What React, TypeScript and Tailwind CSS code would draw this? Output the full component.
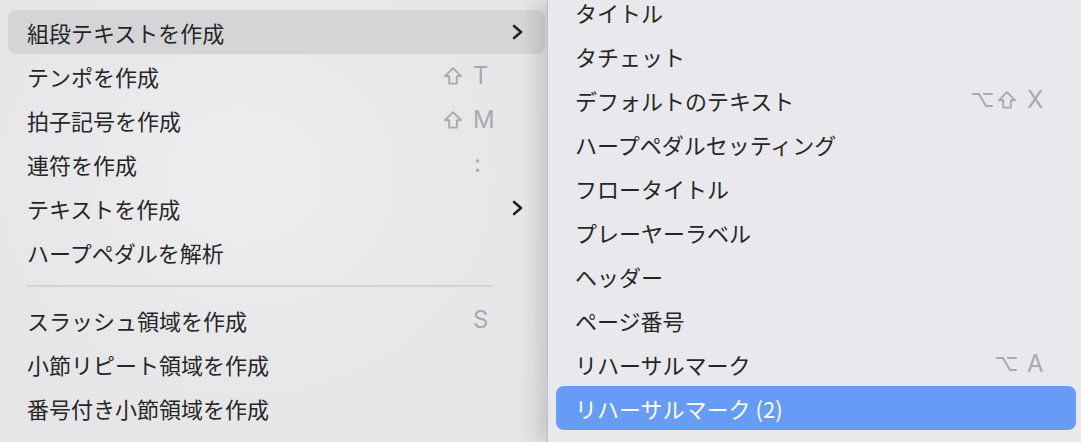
import { ReactNode } from "react";

type Mod = "shift" | "option";

interface MenuItem {
  label: string;
  mods?: Mod[];
  keyLabel?: string;
  submenu?: boolean;
  separator?: boolean;
  active?: boolean;
}

const mainItems: MenuItem[] = [
  { label: "組段テキストを作成", submenu: true, active: true },
  { label: "テンポを作成", mods: ["shift"], keyLabel: "T" },
  { label: "拍子記号を作成", mods: ["shift"], keyLabel: "M" },
  { label: "連符を作成", keyLabel: ":" },
  { label: "テキストを作成", submenu: true },
  { label: "ハープペダルを解析" },
  { label: "", separator: true },
  { label: "スラッシュ領域を作成", keyLabel: "S" },
  { label: "小節リピート領域を作成" },
  { label: "番号付き小節領域を作成" },
  { label: "コード記号領域を作成" },
];

const subItems: MenuItem[] = [
  { label: "タイトル" },
  { label: "タチェット" },
  { label: "デフォルトのテキスト", mods: ["option", "shift"], keyLabel: "X" },
  { label: "ハープペダルセッティング" },
  { label: "フロータイトル" },
  { label: "プレーヤーラベル" },
  { label: "ヘッダー" },
  { label: "ページ番号" },
  { label: "リハーサルマーク", mods: ["option"], keyLabel: "A" },
  { label: "リハーサルマーク (2)", active: true },
  { label: "サブタイトル" },
];

function ShiftIcon() {
  return (
    <svg width="20" height="20" viewBox="0 0 20 20" fill="none">
      <path
        d="M10 2.2 L18 10.2 H13.8 V17.6 H6.2 V10.2 H2 Z"
        stroke="#a9a9ab"
        strokeWidth="1.9"
        strokeLinejoin="round"
      />
    </svg>
  );
}

function OptionIcon() {
  return (
    <svg width="21" height="20" viewBox="0 0 21 20" fill="none">
      <path
        d="M1 4 H7 L14 16 H20 M12 4 H20"
        stroke="#a9a9ab"
        strokeWidth="1.9"
        strokeLinecap="round"
        strokeLinejoin="round"
      />
    </svg>
  );
}

function Chevron() {
  return (
    <svg width="14" height="16" viewBox="0 0 14 16" fill="none">
      <path
        d="M3 2 L10 8 L3 14"
        stroke="#222"
        strokeWidth="2.6"
        strokeLinecap="round"
        strokeLinejoin="round"
      />
    </svg>
  );
}

function Shortcut({ mods, keyLabel }: { mods?: Mod[]; keyLabel?: string }) {
  return (
    <div className="flex items-center">
      <div className="flex items-center gap-[4px] mr-[10px]">
        {mods?.map((m, i) => (
          <span key={i}>{m === "shift" ? <ShiftIcon /> : <OptionIcon />}</span>
        ))}
      </div>
    </div>
  );
}

function Row({
  item,
  rightWidth,
  highlight,
  children,
}: {
  item: MenuItem;
  rightWidth: string;
  highlight: string;
  children?: ReactNode;
}) {
  return (
    <div
      className={`h-[44px] flex items-center pl-[19px] rounded-[8px] ${
        item.active ? highlight : ""
      }`}
    >
      <span className="flex-1 text-[22px] leading-none tracking-[0px]">
        {item.label}
      </span>
      {item.mods && <Shortcut mods={item.mods} />}
      <div className={`${rightWidth} flex items-center shrink-0`}>
        {item.keyLabel && (
          <span
            className={`text-[24px] leading-none text-[#a9a9ab] ${
              item.keyLabel === ":" ? "pl-[1px] text-[18px]" : ""
            }`}
            style={{ fontFamily: "Inter, 'Liberation Sans', sans-serif" }}
          >
            {item.keyLabel}
          </span>
        )}
        {item.submenu && (
          <span className="pl-[38px] flex items-center">
            <Chevron />
          </span>
        )}
        {children}
      </div>
    </div>
  );
}

export default function App() {
  return (
    <div
      className="w-[1081px] h-[442px] overflow-hidden flex text-[#262626]"
      style={{ fontFamily: "'Noto Sans CJK JP', 'Noto Sans', sans-serif" }}
    >
      {/* main menu */}
      <div className="w-[547px] shrink-0 bg-[#e6e6e8] bg-[radial-gradient(ellipse_at_45%_40%,#eeeef0_0%,#e8e8ea_45%,#e4e4e6_100%)] pl-[8px] pr-[2px] pt-[10px]">
        {mainItems.map((item, i) =>
          item.separator ? (
            <div key={i} className="h-[24px] flex items-center pl-[19px] pr-[52px]">
              <div className="h-[2px] w-full bg-[#d4d4d6]" />
            </div>
          ) : (
            <Row
              key={i}
              item={item}
              rightWidth="w-[72px]"
              highlight="bg-[#d5d5d8]"
            />
          )
        )}
      </div>

      {/* submenu */}
      <div className="relative z-10 flex-1 bg-[#e9e9ed] border-l border-[#bfbfc2] shadow-[-10px_0_18px_rgba(0,0,0,0.13)] pl-[8px] pr-[5px]">
        <div className="-mt-[10px]">
          {subItems.map((item, i) => (
            <div key={i} className={item.active ? "text-white" : ""}>
              <Row
                item={item}
                rightWidth="w-[49px]"
                highlight="bg-[#669bf6] rounded-[7px]"
              />
            </div>
          ))}
        </div>
      </div>
    </div>
  );
}
